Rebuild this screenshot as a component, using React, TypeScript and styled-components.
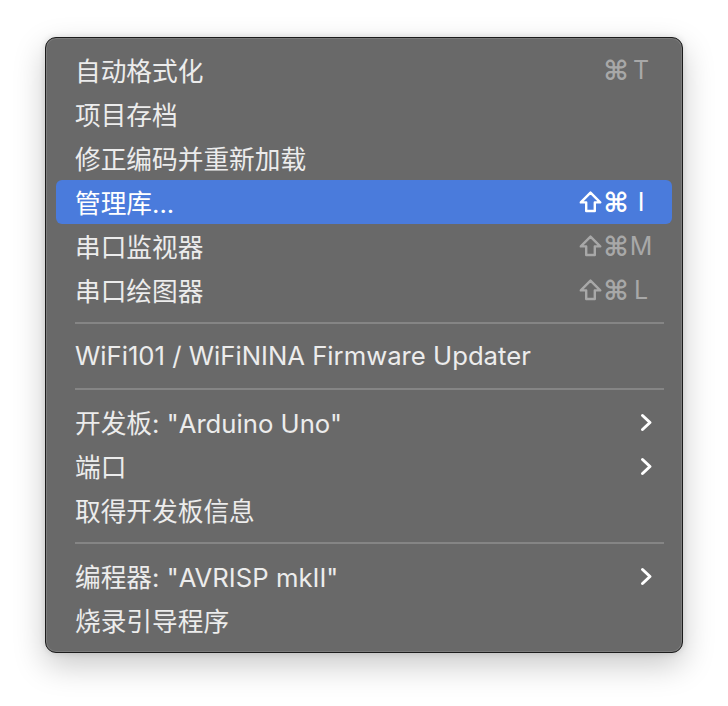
import React from "react";
import styled, { createGlobalStyle } from "styled-components";

const Global = createGlobalStyle`
  html, body { margin: 0; padding: 0; background: #ffffff; }
  body { font-family: "Inter", "Noto Sans CJK SC", sans-serif; }
`;

const Page = styled.div`
  padding: 37px 0 0 45px;
  width: 728px;
  height: 706px;
  box-sizing: border-box;
`;

const Menu = styled.div`
  width: 638px;
  box-sizing: border-box;
  background: #696969;
  border: 1px solid #1c1c1c;
  border-radius: 11px;
  box-shadow: inset 0 0 0 1px rgba(255,255,255,0.12), 0 12px 32px rgba(0,0,0,0.22), 0 0 6px rgba(0,0,0,0.12);
  padding: 10px 10px 10px;
  display: flex;
  flex-direction: column;
`;

const Row = styled.div<{ $active?: boolean }>`
  height: 44px;
  display: flex;
  align-items: center;
  justify-content: space-between;
  padding: 0 19px 0 19px;
  border-radius: 6px;
  background: ${(p) => (p.$active ? "#4a7bdc" : "transparent")};
  color: ${(p) => (p.$active ? "#ffffff" : "#ececec")};
  font-family: "Inter", "Noto Sans CJK SC", sans-serif;
  font-size: 25.7px;
  white-space: nowrap;
`;

const Label = styled.span`
  position: relative;
  top: -1px;
`;

const Separator = styled.div`
  height: 22px;
  display: flex;
  align-items: center;
  padding: 0 8px 0 19px;
  &::after {
    content: "";
    flex: 1;
    height: 2px;
    background: #858585;
  }
`;

const Shortcut = styled.div<{ $active?: boolean }>`
  display: flex;
  align-items: center;
  color: ${(p) => (p.$active ? "#ffffff" : "#a8a8a8")};
  font-family: "DejaVu Sans", "Inter", sans-serif;
  font-size: 27px;
  font-weight: bold;
`;

const Mod = styled.span`
  width: 26px;
  display: flex;
  justify-content: center;
  align-items: center;
`;

const Key = styled.span`
  width: 24px;
  text-align: center;
  font-family: "Inter", sans-serif;
  font-weight: 400;
  font-size: 25px;
`;

const Chevron = () => (
  <svg width="13" height="19" viewBox="0 0 13 19">
    <path d="M2.5 2.5 L10 9.5 L2.5 16.5" fill="none" stroke="#ffffff" strokeWidth="3" strokeLinecap="round" strokeLinejoin="round" />
  </svg>
);

const ShiftIcon = () => (
  <svg width="23" height="22" viewBox="0 0 23 22">
    <path d="M11.5 1.6 L21.2 11.4 H15.8 V20 H7.2 V11.4 H1.8 Z" fill="none" stroke="currentColor" strokeWidth="2.4" strokeLinejoin="round" />
  </svg>
);

type Item =
  | { kind: "sep" }
  | { kind: "item"; label: string; shift?: boolean; cmd?: boolean; key?: string; sub?: boolean; active?: boolean };

const items: Item[] = [
  { kind: "item", label: "自动格式化", cmd: true, key: "T" },
  { kind: "item", label: "项目存档" },
  { kind: "item", label: "修正编码并重新加载" },
  { kind: "item", label: "管理库...", shift: true, cmd: true, key: "I", active: true },
  { kind: "item", label: "串口监视器", shift: true, cmd: true, key: "M" },
  { kind: "item", label: "串口绘图器", shift: true, cmd: true, key: "L" },
  { kind: "sep" },
  { kind: "item", label: "WiFi101 / WiFiNINA Firmware Updater" },
  { kind: "sep" },
  { kind: "item", label: '开发板: "Arduino Uno"', sub: true },
  { kind: "item", label: "端口", sub: true },
  { kind: "item", label: "取得开发板信息" },
  { kind: "sep" },
  { kind: "item", label: '编程器: "AVRISP mkII"', sub: true },
  { kind: "item", label: "烧录引导程序" },
];

export default function App() {
  return (
    <>
      <Global />
      <Page>
        <Menu>
          {items.map((it, i) =>
            it.kind === "sep" ? (
              <Separator key={i} />
            ) : (
              <Row key={i} $active={it.active}>
                <Label>{it.label}</Label>
                {it.cmd && (
                  <Shortcut $active={it.active}>
                    <Mod>{it.shift ? <ShiftIcon /> : null}</Mod>
                    <Mod>⌘</Mod>
                    <Key>{it.key}</Key>
                  </Shortcut>
                )}
                {it.sub && <Chevron />}
              </Row>
            )
          )}
        </Menu>
      </Page>
    </>
  );
}
